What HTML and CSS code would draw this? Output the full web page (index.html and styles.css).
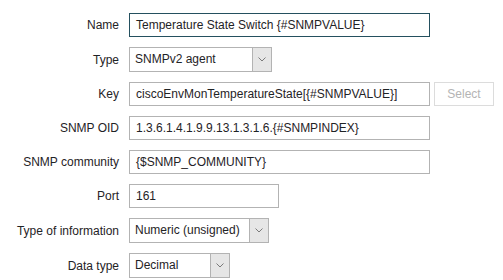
FILE: index.html
```html
<!DOCTYPE html>
<html lang="en">
<head>
<meta charset="UTF-8">
<title>Item prototype</title>
<link rel="stylesheet" href="styles.css">
</head>
<body>

<div class="form">
    <label class="form-label">Name</label>
    <div class="form-field">
        <div class="text-box wide focused">Temperature State Switch {#SNMPVALUE}</div>
    </div>

    <label class="form-label">Type</label>
    <div class="form-field">
        <div class="select-box type-select">
            <span class="select-value">SNMPv2 agent</span>
            <span class="select-arrow"><svg width="8" height="5" viewBox="0 0 8 5"><path d="M0.5 0.5 L4 4 L7.5 0.5" fill="none" stroke="#7a7a7a" stroke-width="1"/></svg></span>
        </div>
    </div>

    <label class="form-label">Key</label>
    <div class="form-field">
        <div class="text-box wide">ciscoEnvMonTemperatureState[{#SNMPVALUE}]</div>
        <button class="btn-select" disabled>Select</button>
    </div>

    <label class="form-label">SNMP OID</label>
    <div class="form-field">
        <div class="text-box wide">1.3.6.1.4.1.9.9.13.1.3.1.6.{#SNMPINDEX}</div>
    </div>

    <label class="form-label">SNMP community</label>
    <div class="form-field">
        <div class="text-box wide">{$SNMP_COMMUNITY}</div>
    </div>

    <label class="form-label">Port</label>
    <div class="form-field">
        <div class="text-box port">161</div>
    </div>

    <label class="form-label">Type of information</label>
    <div class="form-field">
        <div class="select-box info-select">
            <span class="select-value">Numeric (unsigned)</span>
            <span class="select-arrow"><svg width="8" height="5" viewBox="0 0 8 5"><path d="M0.5 0.5 L4 4 L7.5 0.5" fill="none" stroke="#7a7a7a" stroke-width="1"/></svg></span>
        </div>
    </div>

    <label class="form-label">Data type</label>
    <div class="form-field">
        <div class="select-box data-select">
            <span class="select-value">Decimal</span>
            <span class="select-arrow"><svg width="8" height="5" viewBox="0 0 8 5"><path d="M0.5 0.5 L4 4 L7.5 0.5" fill="none" stroke="#7a7a7a" stroke-width="1"/></svg></span>
        </div>
    </div>
</div>

</body>
</html>
```

FILE: styles.css
```css
body {
    font-family: "Liberation Sans", Arial, sans-serif;
    font-size: 12px;
    color: #1f2326;
    margin: 0;
    padding: 13px 0 0 0;
    background-color: #fff;
}
.form {
    display: grid;
    grid-template-columns: 119px auto;
    column-gap: 10px;
    row-gap: 10px;
    align-items: center;
}
.form-label {
    text-align: right;
}
.form-field {
    display: flex;
    align-items: center;
    gap: 4px;
}
.text-box {
    box-sizing: border-box;
    height: 24px;
    line-height: 22px;
    padding: 0 6px;
    border: 1px solid #b3b3b3;
    white-space: nowrap;
    overflow: hidden;
}
.text-box.wide {
    width: 301px;
}
.text-box.port {
    width: 150px;
}
.text-box.focused {
    border-color: #24505f;
}
.btn-select {
    box-sizing: border-box;
    width: 60px;
    height: 24px;
    font-family: inherit;
    font-size: 12px;
    color: #b4b4b4;
    background-color: #fff;
    border: 1px solid #dcdcdc;
    padding: 0;
}
.select-box {
    box-sizing: border-box;
    height: 25px;
    display: flex;
    border: 1px solid #b3b3b3;
}
.select-value {
    flex: 1;
    line-height: 23px;
    padding: 0 5px;
    white-space: nowrap;
}
.select-arrow {
    width: 18px;
    display: flex;
    align-items: center;
    justify-content: center;
    background-color: #e6e6e6;
    border-left: 1px solid #b3b3b3;
}
.type-select {
    width: 143px;
}
.info-select {
    width: 140px;
}
.data-select {
    width: 101px;
}
```
